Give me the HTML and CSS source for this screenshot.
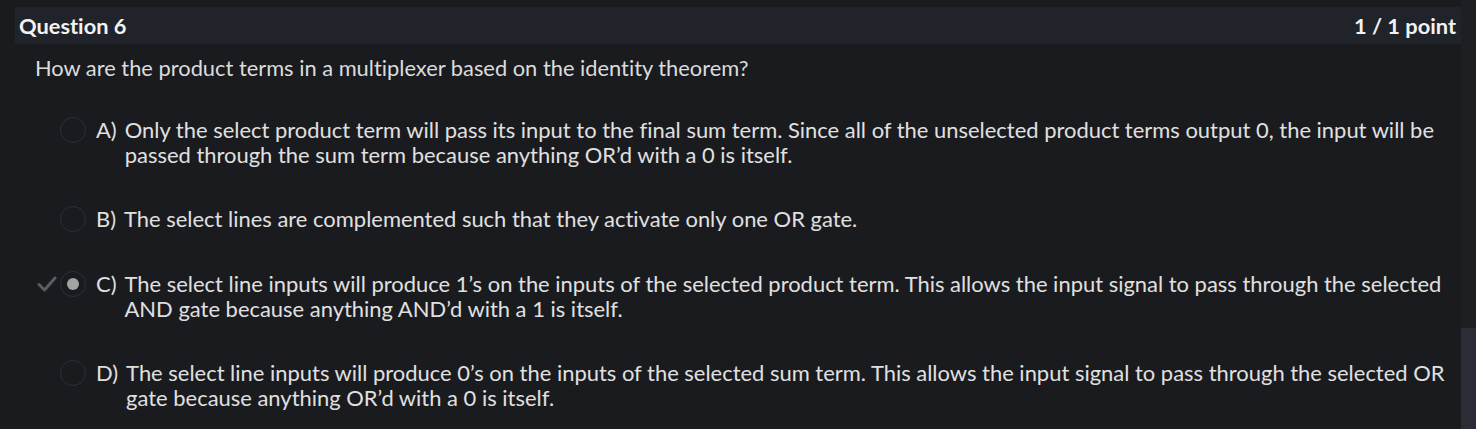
FILE: index.html
```html
<!DOCTYPE html>
<html lang="en">
<head>
<meta charset="utf-8">
<title>Question 6</title>
<link rel="stylesheet" href="styles.css">
</head>
<body>
<div class="page">
  <main class="main">
    <div class="q-header">
      <span class="q-title">Question 6</span>
      <span class="q-score">1 / 1 point</span>
    </div>
    <p class="q-text">How are the product terms in a multiplexer based on the identity theorem?</p>
    <ul class="options">
      <li class="option">
        <span class="mark"></span>
        <span class="radio"></span>
        <span class="label">A)</span>
        <span class="answer">Only the select product term will pass its input to the final sum term. Since all of the unselected product terms output 0, the input will be passed through the sum term because anything OR’d with a 0 is itself.</span>
      </li>
      <li class="option">
        <span class="mark"></span>
        <span class="radio"></span>
        <span class="label">B)</span>
        <span class="answer">The select lines are complemented such that they activate only one OR gate.</span>
      </li>
      <li class="option">
        <span class="mark"><svg width="20" height="16" viewBox="0 0 20 16"><path d="M2 8.5 L7.5 14 L18 2" fill="none" stroke="#5c5d60" stroke-width="3" stroke-linecap="round" stroke-linejoin="round"/></svg></span>
        <span class="radio checked"></span>
        <span class="label">C)</span>
        <span class="answer">The select line inputs will produce 1’s on the inputs of the selected product term. This allows the input signal to pass through the selected AND gate because anything AND’d with a 1 is itself.</span>
      </li>
      <li class="option">
        <span class="mark"></span>
        <span class="radio"></span>
        <span class="label">D)</span>
        <span class="answer">The select line inputs will produce 0’s on the inputs of the selected sum term. This allows the input signal to pass through the selected OR gate because anything OR’d with a 0 is itself.</span>
      </li>
    </ul>
  </main>
  <div class="scrollbar"><div class="thumb"></div></div>
</div>
</body>
</html>
```
FILE: styles.css
```css
html, body {
  margin: 0;
  padding: 0;
  background: #1a1b1f;
  height: 100%;
  overflow: hidden;
}
body {
  font-family: Lato, "Open Sans", sans-serif;
  font-variant-ligatures: none;
  color: #dcdcdc;
}
.page {
  display: flex;
  height: 429px;
}
.main {
  flex: 1;
  padding: 7px 0 0 15px;
  min-width: 0;
}
.q-header {
  display: flex;
  justify-content: space-between;
  align-items: center;
  height: 37px;
  background: #21232a;
  padding: 0 5px 0 4px;
  font-weight: 700;
  font-size: 21.8px;
  color: #f2f2f2;
}
.q-text {
  margin: 11px 0 0 20px;
  font-size: 21.85px;
  line-height: 26px;
  color: #dcdcdc;
}
.options {
  list-style: none;
  margin: 36px 0 0 0;
  padding: 0;
}
.option {
  display: flex;
  align-items: flex-start;
  font-size: 21.95px;
  line-height: 25px;
  margin-bottom: 39px;
}
.mark {
  flex: none;
  width: 23px;
  height: 25px;
  margin-left: 22px;
  display: flex;
  align-items: center;
  justify-content: flex-start;
}
.mark svg { display: block; }
.radio {
  box-sizing: border-box;
  width: 26px;
  height: 26px;
  border: 1px solid #2c2f39;
  border-radius: 50%;
  display: flex;
  align-items: center;
  justify-content: center;
  flex: none;
}
.radio.checked::after {
  content: "";
  width: 12px;
  height: 12px;
  border-radius: 50%;
  background: #a3a3a3;
}
.label {
  margin-left: 10px;
  flex: none;
  color: #e0e0e0;
}
.answer {
  margin-left: 8px;
  padding-right: 6px;
  color: #e0e0e0;
}
.scrollbar {
  width: 15px;
  background: #1e1f23;
  display: flex;
  flex-direction: column;
}
.thumb {
  margin-top: 328px;
  flex: 1;
  background: #2a2d35;
}
```
